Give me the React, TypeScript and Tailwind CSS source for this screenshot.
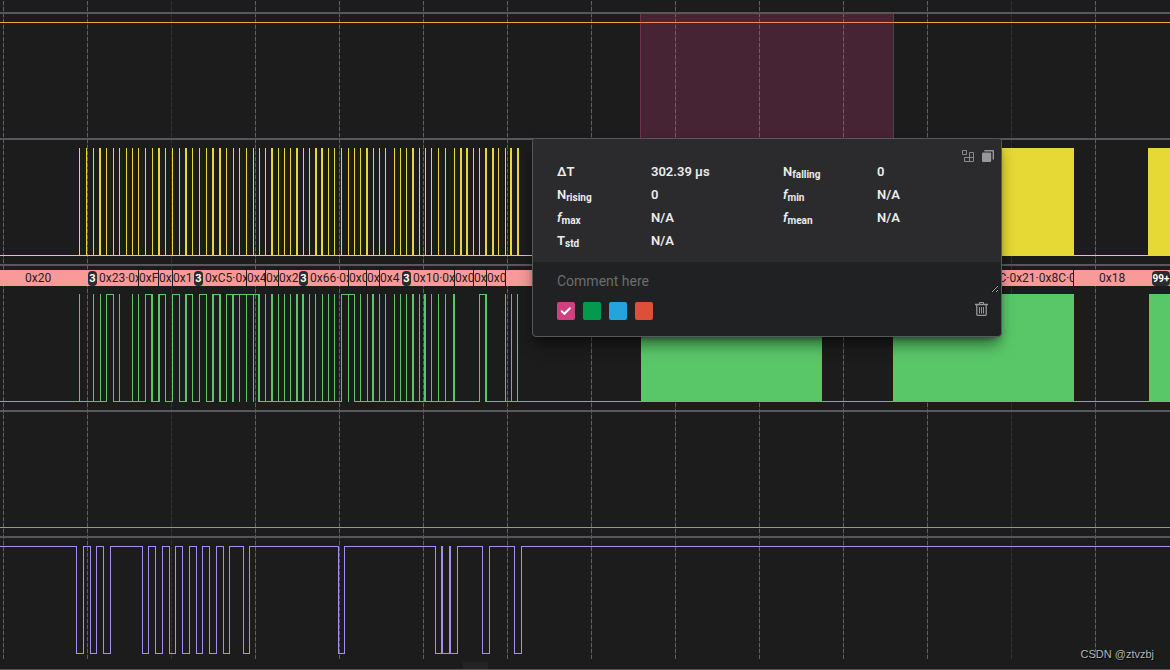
import { useState } from "react";
import type { ReactNode } from "react";

const HIGH = 8;
const LOW = 115;

interface TraceProps {
  color: string;
  startHigh?: boolean;
  toggles?: number[];
  spikes?: number[];
  wideSpikes?: number[];
  blocks?: [number, number | string][];
}

// A digital channel: the level changes at every toggle, spikes are pulses too short to open up
function Trace({ color, startHigh = false, toggles = [], spikes = [], wideSpikes = [], blocks = [] }: TraceProps) {
  const starts = [0, ...toggles];

  return (
    <g fill={color}>
      {starts.map((x, i) => {
        const high = (i % 2 === 0) === startHigh;
        const end = starts[i + 1];
        return (
          <rect
            key={`level-${x}`}
            x={x}
            y={high ? HIGH : LOW}
            width={end === undefined ? "100%" : end - x + 1}
            height={1}
          />
        );
      })}
      {[...toggles, ...spikes].map((x) => (
        <rect key={`edge-${x}`} x={x} y={HIGH} width={1} height={LOW - HIGH + 1} />
      ))}
      {wideSpikes.map((x) => (
        <rect key={`wide-${x}`} x={x} y={HIGH} width={2} height={LOW - HIGH + 1} />
      ))}
      {blocks.map(([x, width]) => (
        <rect key={`block-${x}`} x={x} y={HIGH} width={width} height={LOW - HIGH + 1} />
      ))}
    </g>
  );
}

function Lane({ children }: { children: ReactNode }) {
  return (
    <svg className="block w-full h-[124px]" shapeRendering="crispEdges">
      {children}
    </svg>
  );
}

const GRID = [3, 87, 171, 255, 339, 423, 507, 591, 675, 759, 843, 927, 1011, 1095];
const FAINT = [171, 1011];

function GridLines() {
  return (
    <svg className="absolute inset-0 w-full h-full" shapeRendering="crispEdges">
      {GRID.map((x) => (
        <g key={x} opacity={FAINT.includes(x) ? 0.35 : 1}>
          <line x1={x + 0.5} x2={x + 0.5} y1={1} y2={659} stroke="#303032" />
          <line x1={x + 0.5} x2={x + 0.5} y1={1} y2={659} stroke="#606062" strokeDasharray="4 2" />
        </g>
      ))}
    </svg>
  );
}

const CLOCK_SPIKES = [
  79, 86, 93, 106, 113, 119, 126, 132, 138, 145, 152, 165, 172, 179, 192, 199, 206, 226, 233, 239, 246, 253, 259, 265,
  278, 284, 290, 303, 309, 328, 334, 341, 348, 354, 360, 373, 379, 385, 394, 400, 406, 419, 425, 431, 438, 445, 454,
  473, 479, 498, 505,
];
const CLOCK_WIDE = [99, 158, 185, 212, 219, 271, 296, 315, 321, 366, 412, 460, 466, 485, 492, 510, 517];

const DATA_TOGGLES = [
  106, 113, 145, 152, 158, 165, 172, 179, 185, 192, 199, 206, 212, 220, 226, 259, 341, 354, 479, 486,
];
const DATA_SPIKES = [
  79, 93, 100, 119, 132, 138, 239, 246, 253, 265, 278, 284, 290, 309, 315, 322, 328, 334, 348, 360, 367, 379, 385, 394,
  400, 406, 419, 431, 438, 445, 505, 511, 517,
];
const DATA_WIDE = [151, 158, 185, 212, 219, 232, 258, 271, 296, 302, 372, 412, 424, 453, 485];

const ENABLE_TOGGLES = [
  76, 83, 90, 96, 103, 110, 142, 148, 155, 162, 169, 175, 182, 189, 196, 202, 209, 216, 223, 229, 243, 249, 338, 344,
  435, 457, 482, 489, 514, 521,
];

interface Frame {
  width: number;
  text: string;
  badge?: boolean;
  className?: string;
}

// A frame that is followed by a badge has no divider
const FRAMES: Frame[] = [
  { width: 88, text: "0x20", className: "pl-[25px]" },
  { width: 51, text: "0x23·0x", badge: true, className: "border-r" },
  { width: 20, text: "0xF", className: "border-r" },
  { width: 14, text: "0x", className: "border-r" },
  { width: 21, text: "0x1" },
  { width: 53, text: "0xC5·0x", badge: true, className: "border-r" },
  { width: 19, text: "0x4", className: "border-r" },
  { width: 13, text: "0x", className: "border-r" },
  { width: 20, text: "0x2" },
  { width: 50, text: "0x66·0x", badge: true, className: "border-r" },
  { width: 18, text: "0x0", className: "border-r" },
  { width: 13, text: "0x", className: "border-r" },
  { width: 22, text: "0x4" },
  { width: 53, text: "0x10·0x", badge: true, className: "border-r" },
  { width: 19, text: "0x0", className: "border-r" },
  { width: 13, text: "0x", className: "border-r" },
  { width: 19, text: "0x0", className: "border-r" },
  { width: 568, text: "0x8C·0x21·0x8C·0", className: "border-r pl-[473px]" },
];

function DecodedBus() {
  return (
    <div className="flex h-4 bg-[#f79a98] text-xs leading-4 text-[#2a1a1c] overflow-hidden">
      {FRAMES.map((frame, i) => (
        <div
          key={i}
          className={`flex shrink-0 overflow-hidden whitespace-nowrap border-[#1c1c1c] ${frame.className ?? ""}`}
          style={{ width: frame.width }}
        >
          {frame.badge && (
            <span className="shrink-0 w-[9px] h-[15px] mt-px mr-0.5 rounded bg-[#2b2c2e] text-center text-[11px] font-bold leading-4 text-white">
              3
            </span>
          )}
          <span>{frame.text}</span>
        </div>
      ))}
      <div className="flex flex-1 justify-between overflow-hidden">
        <span className="pl-[25px]">0x18</span>
        <span className="w-[18px] h-[15px] mt-px rounded bg-[#2b2c2e] text-center text-[10px] font-bold leading-4 text-white">
          99+
        </span>
      </div>
    </div>
  );
}

interface MeasureProps {
  symbol: string;
  sub?: string;
  value: string;
  italic?: boolean;
}

function Measure({ symbol, sub, value, italic }: MeasureProps) {
  return (
    <>
      <dt>
        <span className={italic ? "italic" : ""}>{symbol}</span>
        {sub && <sub className="-bottom-0.5 text-[10px] font-bold">{sub}</sub>}
      </dt>
      <dd>{value}</dd>
    </>
  );
}

const COLORS = [
  { name: "Pink", className: "bg-[#d04080]" },
  { name: "Green", className: "bg-[#049a4e]" },
  { name: "Blue", className: "bg-[#26a2dc]" },
  { name: "Red", className: "bg-[#de4f3a]" },
];

function MeasurementPopup() {
  const [color, setColor] = useState("Pink");
  const [comment, setComment] = useState("");

  return (
    <div className="absolute left-[532px] top-[138px] w-[470px] rounded border border-[#58585c] bg-[#202123] shadow-lg shadow-black/50 overflow-hidden">
      <div className="relative bg-[#2b2b2d] pt-[21px] pb-[10px] pl-6">
        <dl className="grid grid-cols-[94px_132px_94px_1fr] auto-rows-[23px] text-[13px] leading-[23px] font-semibold text-[#ececec]">
          <Measure symbol="ΔT" value="302.39 μs" />
          <Measure symbol="N" sub="falling" value="0" />
          <Measure symbol="N" sub="rising" value="0" />
          <Measure symbol="f" sub="min" value="N/A" italic />
          <Measure symbol="f" sub="max" value="N/A" italic />
          <Measure symbol="f" sub="mean" value="N/A" italic />
          <Measure symbol="T" sub="std" value="N/A" />
        </dl>
        <div className="absolute right-[7px] top-[11px] flex gap-2">
          <button type="button" aria-label="Add measurement" className="text-[#8a8a8c]">
            <svg className="w-3 h-3" viewBox="0 0 12 12" fill="none" stroke="currentColor">
              <path d="M.5.5h4v4h-4zM7.5 2.5h4v9h-9v-4h9M7.5 2.5v9" />
            </svg>
          </button>
          <button type="button" aria-label="Copy" className="text-[#98989a]">
            <svg className="w-3 h-3" viewBox="0 0 12 12" fill="currentColor">
              <rect x="0" y="2.5" width="9.2" height="9.5" rx="1.2" />
              <path d="M2.4 0H11a1 1 0 0 1 1 1v8.6h-1.4V1.4H2.4z" />
            </svg>
          </button>
        </div>
      </div>
      <div className="pr-0.5">
        <textarea
          aria-label="Comment"
          placeholder="Comment here"
          value={comment}
          onChange={(e) => setComment(e.target.value)}
          className="block w-full h-[31px] resize overflow-hidden bg-transparent pl-6 pt-[9px] text-sm leading-5 text-[#ececec] placeholder:text-[#6c6c6e] outline-none"
        />
      </div>
      <div className="flex items-start justify-between pl-6 pr-[13px] pt-[9px] pb-4">
        <div className="flex gap-2">
          {COLORS.map((c) => (
            <label key={c.name} className={`relative block w-[18px] h-[18px] rounded-xs ${c.className}`}>
              <input
                type="radio"
                name="color"
                aria-label={c.name}
                checked={color === c.name}
                onChange={() => setColor(c.name)}
                className="block w-full h-full appearance-none"
              />
              {color === c.name && (
                <svg
                  className="absolute inset-0 pointer-events-none"
                  viewBox="0 0 18 18"
                  fill="none"
                  stroke="white"
                  strokeWidth={2}
                >
                  <path d="M4.7 9.2l2.8 2.6 5.4-5.6" strokeLinecap="round" />
                </svg>
              )}
            </label>
          ))}
        </div>
        <button type="button" aria-label="Delete" className="text-[#98989a]">
          <svg className="w-[13px] h-[14px]" viewBox="0 0 13 14" fill="none" stroke="currentColor">
            <path d="M0 2.5h13" strokeWidth={1.4} />
            <path d="M4.5 2.5v-2h4v2" />
            <path d="M1.8 3v9.2q0 1.2 1.2 1.2h7q1.2 0 1.2-1.2V3" strokeWidth={1.3} />
            <path d="M4.5 5v6.5M6.5 5v6.5M8.5 5v6.5" />
          </svg>
        </button>
      </div>
    </div>
  );
}

export default function App() {
  return (
    <div className="relative overflow-hidden bg-[#1c1c1c] font-['Roboto',sans-serif]">
      <GridLines />
      <main className="relative border-b border-[#58585c]">
        <div className="h-3" />
        <section aria-label="Channel 0" className="border-t-2 border-[#58585c]">
          <Lane>
            <Trace color="#f9a647" startHigh />
            <rect x={640} y={0} width={254} height={124} fill="#d04080" fillOpacity={0.24} />
            <rect x={640} y={0} width={1} height={124} fill="#d04080" fillOpacity={0.35} />
            <rect x={893} y={0} width={1} height={124} fill="#d04080" fillOpacity={0.35} />
          </Lane>
        </section>
        <section aria-label="Channel 1" className="border-t-2 border-[#58585c]">
          <Lane>
            <Trace
              color="#e6d835"
              spikes={CLOCK_SPIKES}
              wideSpikes={CLOCK_WIDE}
              blocks={[
                [640, 182],
                [893, 181],
                [1148, "100%"],
              ]}
            />
          </Lane>
        </section>
        <section aria-label="Channel 2" className="border-t-2 border-[#58585c] pt-1">
          <DecodedBus />
          <Lane>
            <Trace
              color="#59c768"
              toggles={DATA_TOGGLES}
              spikes={DATA_SPIKES}
              wideSpikes={DATA_WIDE}
              blocks={[
                [641, 181],
                [893, 181],
                [1149, "100%"],
              ]}
            />
          </Lane>
        </section>
        <section aria-label="Channel 3" className="border-t-2 border-[#58585c]">
          <Lane>
            <Trace color="#58a6e6" />
          </Lane>
        </section>
        <section aria-label="Channel 4" className="border-t-2 border-[#58585c]">
          <Lane>
            <Trace color="#a98df5" startHigh toggles={ENABLE_TOGGLES} wideSpikes={[441, 449]} />
          </Lane>
        </section>
        <div className="h-[7px]">
          <div className="ml-[463px] w-[25px] h-full bg-[#242424]" />
        </div>
      </main>
      <MeasurementPopup />
      <span className="absolute right-4 bottom-2 font-['Liberation_Sans',sans-serif] text-[11px] leading-4 text-[#b4b4b4] [text-shadow:1px_1px_1px_#000]">
        CSDN @ztvzbj
      </span>
    </div>
  );
}
